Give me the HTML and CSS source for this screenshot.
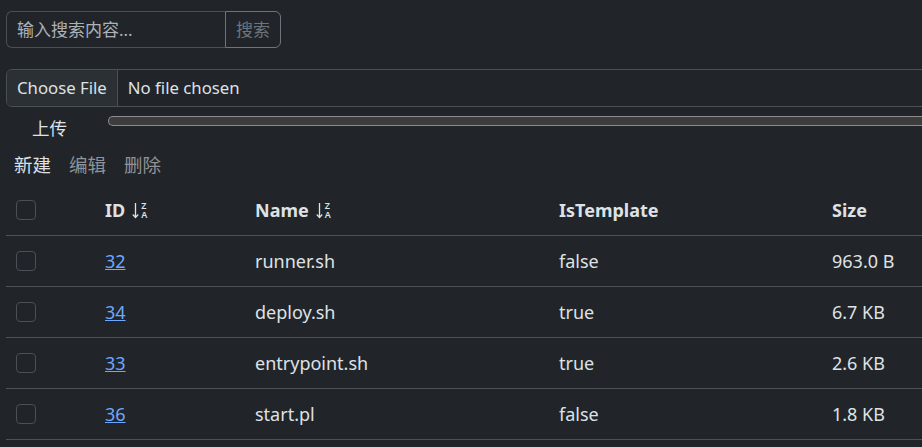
FILE: index.html
```html
<!DOCTYPE html>
<html lang="zh-CN">
<head>
<meta charset="utf-8">
<title>Files</title>
<link rel="stylesheet" href="styles.css">
</head>
<body>
<div class="page">
  <div class="search-group">
    <input class="search-input" type="text" placeholder="输入搜索内容...">
    <button class="search-btn" type="button">搜索</button>
  </div>

  <div class="file-input">
    <span class="file-btn">Choose File</span>
    <span class="file-name">No file chosen</span>
  </div>

  <div class="upload-row">
    <button class="upload-btn" type="button">上传</button>
    <div class="progress"></div>
  </div>

  <div class="toolbar">
    <span class="tool active">新建</span>
    <span class="tool">编辑</span>
    <span class="tool">删除</span>
  </div>

  <table class="files">
    <colgroup>
      <col class="c-check"><col class="c-id"><col class="c-name"><col class="c-tpl"><col class="c-size"><col class="c-rest">
    </colgroup>
    <thead>
      <tr>
        <th><span class="check"></span></th>
        <th><span class="sortable">ID <span class="sort-icon"><svg width="7" height="17" viewBox="0 0 7 17"><path d="M3.5 1v14.5M0.8 12.5l2.7 3 2.7-3" fill="none" stroke="#dee2e6" stroke-width="1.3"/></svg><span class="az"><span>Z</span><span>A</span></span></span></span></th>
        <th><span class="sortable">Name <span class="sort-icon"><svg width="7" height="17" viewBox="0 0 7 17"><path d="M3.5 1v14.5M0.8 12.5l2.7 3 2.7-3" fill="none" stroke="#dee2e6" stroke-width="1.3"/></svg><span class="az"><span>Z</span><span>A</span></span></span></span></th>
        <th>IsTemplate</th>
        <th>Size</th>
        <th></th>
      </tr>
    </thead>
    <tbody>
      <tr><td><span class="check"></span></td><td><a href="#">32</a></td><td>runner.sh</td><td>false</td><td>963.0 B</td><td></td></tr>
      <tr><td><span class="check"></span></td><td><a href="#">34</a></td><td>deploy.sh</td><td>true</td><td>6.7 KB</td><td></td></tr>
      <tr><td><span class="check"></span></td><td><a href="#">33</a></td><td>entrypoint.sh</td><td>true</td><td>2.6 KB</td><td></td></tr>
      <tr><td><span class="check"></span></td><td><a href="#">36</a></td><td>start.pl</td><td>false</td><td>1.8 KB</td><td></td></tr>
    </tbody>
  </table>
</div>
</body>
</html>
```

FILE: styles.css
```css
html, body {
  margin: 0;
  padding: 0;
  background: #212529;
  overflow: hidden;
}
body {
  color: #dee2e6;
  font-family: "Noto Sans", "Noto Sans CJK SC", sans-serif;
  font-size: 16px;
  line-height: 24px;
}
.page {
  width: 1100px;
  padding: 11px 0 0 6px;
}
.search-group {
  display: flex;
  width: 275px;
  height: 37px;
  font-size: 17px;
}
.search-input {
  flex: 1;
  min-width: 0;
  box-sizing: border-box;
  height: 37px;
  background: #212529;
  border: 1px solid #495057;
  border-right: none;
  border-radius: 6px 0 0 6px;
  padding: 0 10px;
  font: inherit;
  color: #dee2e6;
  outline: none;
}
.search-input::placeholder {
  color: rgba(222, 226, 230, 0.75);
}
.search-btn {
  box-sizing: border-box;
  width: 56px;
  height: 37px;
  background: transparent;
  border: 1px solid #6c757d;
  border-radius: 0 6px 6px 0;
  color: #6c757d;
  font: inherit;
  padding: 0;
}
.file-input {
  margin-top: 21px;
  display: flex;
  box-sizing: border-box;
  height: 38px;
  border: 1px solid #495057;
  border-radius: 6px;
  overflow: hidden;
  font-size: 16.75px;
}
.file-btn {
  display: flex;
  align-items: center;
  padding: 0 10px;
  background: #2b3035;
  border-right: 1px solid #495057;
}
.file-name {
  display: flex;
  align-items: center;
  padding-left: 10px;
}
.upload-row {
  display: flex;
  align-items: flex-start;
  margin-top: 9px;
  height: 28px;
}
.upload-btn {
  background: transparent;
  border: none;
  color: #dee2e6;
  font: inherit;
  font-size: 17.5px;
  padding: 0;
  margin: 0 0 0 26px;
  width: 76px;
  text-align: left;
}
.progress {
  flex: 1;
  box-sizing: border-box;
  height: 10px;
  background: #3d3d3d;
  border: 1px solid #8c8c8c;
  border-radius: 5px 0 0 5px;
  border-right: none;
}
.toolbar {
  display: flex;
  gap: 18px;
  margin-left: 8px;
  height: 41px;
  align-items: center;
  font-size: 18.5px;
}
.tool {
  color: #8f9398;
}
.tool.active {
  color: #dee2e6;
}
.files {
  margin-top: 0;
  width: 1094px;
  table-layout: fixed;
  border-collapse: collapse;
  font-size: 18px;
}
.c-check { width: 89px; }
.c-id { width: 150px; }
.c-name { width: 304px; }
.c-tpl { width: 273px; }
.c-size { width: 160px; }
.files th, .files td {
  height: 50px;
  padding: 0 0 0 10px;
  text-align: left;
  vertical-align: middle;
  border-bottom: 1px solid #4d5154;
  white-space: nowrap;
}
.files th {
  font-weight: 700;
}
.check {
  display: block;
  box-sizing: border-box;
  width: 20px;
  height: 20px;
  border: 1px solid #495057;
  border-radius: 4px;
  background: #212529;
}
.files a {
  color: #6ea8fe;
  text-decoration: underline;
}
.sortable {
  display: inline-flex;
  align-items: center;
  gap: 7px;
}
.sort-icon {
  display: inline-flex;
  align-items: center;
  gap: 2px;
}
.az {
  display: flex;
  flex-direction: column;
  font-size: 9px;
  line-height: 9px;
  font-weight: 600;
}
```
